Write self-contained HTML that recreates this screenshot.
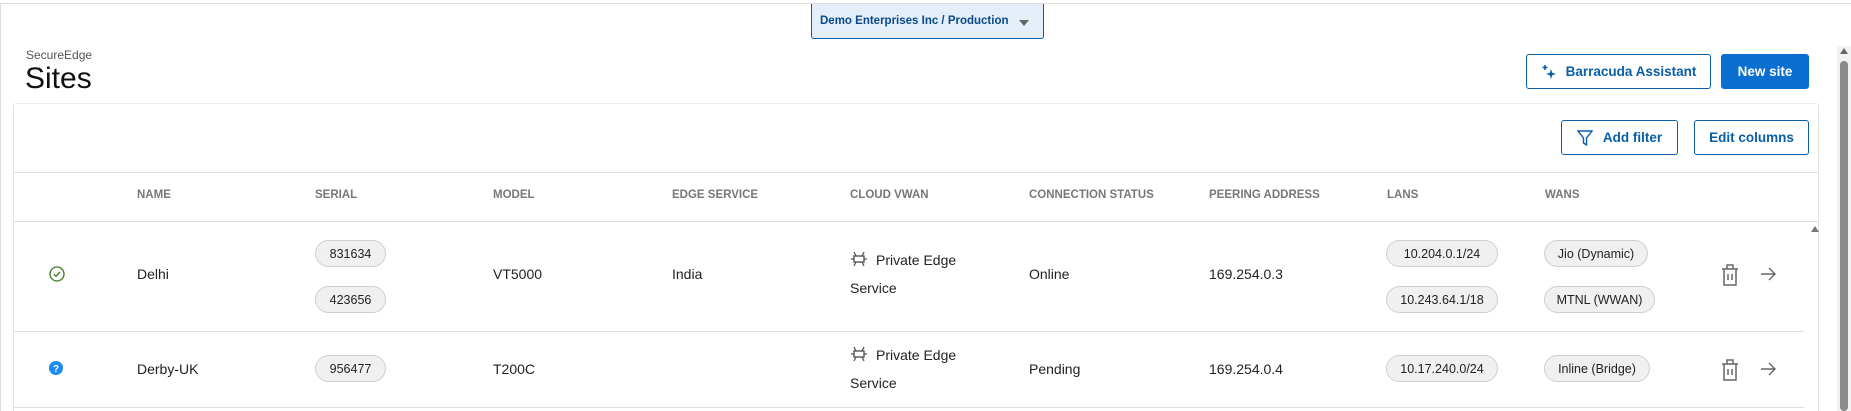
<!DOCTYPE html>
<html><head><meta charset="utf-8"><style>
*{box-sizing:border-box;margin:0;padding:0}
body{width:1851px;height:411px;overflow:hidden;background:#fff;font-family:"Liberation Sans",sans-serif;color:#222;position:relative}
.a{position:absolute}
.h{font-size:11.5px;color:#6b6b6b;top:189px;font-weight:bold;color:#777}
.t{font-size:14px;color:#222}
.chip{position:absolute;height:27px;border:1px solid #cfcfcf;background:#f0f0f0;border-radius:14px;font-size:12.5px;display:flex;align-items:center;justify-content:center;color:#222}
.btn{position:absolute;border:1px solid #0a5ea8;border-radius:3px;color:#0a5ea8;font-size:13.5px;font-weight:bold;display:flex;align-items:center;justify-content:center;background:#fff}
.line{position:absolute;height:1px;background:#e0e0e0}
</style></head><body>
<div class="line" style="left:0;top:3px;width:1851px;background:#ddd"></div>
<div class="a" style="left:0;top:3px;width:1px;height:408px;background:#ddd"></div>
<div class="a" style="left:811px;top:4px;width:233px;height:35px;background:#e4eef9;border:1px solid #0a5ea8;border-top:none;border-radius:0 0 3px 3px;font-size:11.5px;color:#0a4a8a;padding:11px 0 0 8px;font-weight:bold">Demo Enterprises Inc / Production<span style="position:absolute;right:14px;top:16px;border-left:5px solid transparent;border-right:5px solid transparent;border-top:6px solid #666"></span></div>
<div class="a" style="left:26px;top:48px;font-size:12px;color:#555">SecureEdge</div>
<div class="a" style="left:25px;top:62px;font-size:30px;color:#111">Sites</div>
<div class="btn" style="left:1526px;top:54px;width:185px;height:35px"><svg width="16" height="16" viewBox="0 0 16 16" style="margin-right:9px"><path d="M4 1v5M1.5 3.5h5" stroke="#0a5ea8" stroke-width="1.6"/><path d="M10 5l1.2 3.8L15 10l-3.8 1.2L10 15l-1.2-3.8L5 10l3.8-1.2z" fill="#0a5ea8"/></svg>Barracuda Assistant</div>
<div class="btn" style="left:1721px;top:54px;width:88px;height:35px;background:#0a6fd0;border-color:#0a6fd0;color:#fff">New site</div>
<div class="a" style="left:13px;top:103px;width:1806px;height:308px;border-left:1px solid #e4e4e4;border-right:1px solid #e4e4e4;border-top:1px solid #eee;border-radius:3px 3px 0 0"></div>
<div class="btn" style="left:1561px;top:120px;width:117px;height:35px"><svg width="16" height="18" viewBox="0 0 16 18" style="margin-right:10px"><path d="M1 2h14l-5.5 7v7l-3-2v-5z" fill="none" stroke="#0a5ea8" stroke-width="1.4"/></svg>Add filter</div>
<div class="btn" style="left:1694px;top:120px;width:115px;height:35px">Edit columns</div>
<div class="line" style="left:14px;top:172px;width:1804px"></div>
<div class="line" style="left:14px;top:221px;width:1804px"></div>
<div class="line" style="left:14px;top:331px;width:1790px"></div>
<div class="line" style="left:14px;top:407px;width:1790px"></div>
<div class="a h" style="left:137px">NAME</div><div class="a h" style="left:315px">SERIAL</div><div class="a h" style="left:493px">MODEL</div><div class="a h" style="left:672px">EDGE SERVICE</div><div class="a h" style="left:850px">CLOUD VWAN</div><div class="a h" style="left:1029px">CONNECTION STATUS</div><div class="a h" style="left:1209px">PEERING ADDRESS</div><div class="a h" style="left:1387px">LANS</div><div class="a h" style="left:1545px">WANS</div>
<svg class="a" style="left:49px;top:266px" width="16" height="16" viewBox="0 0 16 16"><circle cx="8" cy="8" r="7" fill="none" stroke="#3d7a1d" stroke-width="1.3"/><path d="M5 8.3l2 2 4-4.3" fill="none" stroke="#3d7a1d" stroke-width="1.4"/></svg>
<div class="a t" style="left:137px;top:266px">Delhi</div>
<div class="chip" style="left:315px;top:240px;width:71px">831634</div>
<div class="chip" style="left:315px;top:286px;width:71px">423656</div>
<div class="a t" style="left:493px;top:266px">VT5000</div>
<div class="a t" style="left:672px;top:266px">India</div>
<svg class="a" style="left:850px;top:250px" width="18" height="18" viewBox="0 0 18 18"><rect x="4" y="6" width="10" height="6" fill="none" stroke="#555" stroke-width="1.4"/><path d="M1 9h3M14 9h3M6 6L4 2M12 6l2-4M6 12l-2 4M12 12l2 4" stroke="#555" stroke-width="1.3"/></svg>
<div class="a t" style="left:876px;top:252px">Private Edge</div>
<div class="a t" style="left:850px;top:280px">Service</div>
<div class="a t" style="left:1029px;top:266px">Online</div>
<div class="a t" style="left:1209px;top:266px">169.254.0.3</div>
<div class="chip" style="left:1386px;top:240px;width:112px">10.204.0.1/24</div>
<div class="chip" style="left:1386px;top:286px;width:112px">10.243.64.1/18</div>
<div class="chip" style="left:1544px;top:240px;width:104px">Jio (Dynamic)</div>
<div class="chip" style="left:1544px;top:286px;width:111px">MTNL (WWAN)</div>
<svg class="a" style="left:1719px;top:263px" width="22" height="24" viewBox="0 0 22 24"><path d="M3 6h16M8 6V2h6v4M5 6v16h12V6M9 11v6M13 11v6" fill="none" stroke="#666" stroke-width="1.5"/></svg>
<svg class="a" style="left:1759px;top:265px" width="18" height="18" viewBox="0 0 18 18"><path d="M2 9h14M10 3l6 6-6 6" fill="none" stroke="#666" stroke-width="1.4"/></svg>
<div class="a" style="left:1811px;top:226px;border-left:4px solid transparent;border-right:4px solid transparent;border-bottom:6px solid #777"></div>
<svg class="a" style="left:49px;top:361px" width="14" height="14" viewBox="0 0 14 14"><circle cx="7" cy="7" r="7" fill="#1d8cf0"/><text x="7" y="11" font-size="10" font-weight="bold" fill="#fff" text-anchor="middle" font-family="Liberation Sans">?</text></svg>
<div class="a t" style="left:137px;top:361px">Derby-UK</div>
<div class="chip" style="left:315px;top:355px;width:71px">956477</div>
<div class="a t" style="left:493px;top:361px">T200C</div>
<svg class="a" style="left:850px;top:345px" width="18" height="18" viewBox="0 0 18 18"><rect x="4" y="6" width="10" height="6" fill="none" stroke="#555" stroke-width="1.4"/><path d="M1 9h3M14 9h3M6 6L4 2M12 6l2-4M6 12l-2 4M12 12l2 4" stroke="#555" stroke-width="1.3"/></svg>
<div class="a t" style="left:876px;top:347px">Private Edge</div>
<div class="a t" style="left:850px;top:375px">Service</div>
<div class="a t" style="left:1029px;top:361px">Pending</div>
<div class="a t" style="left:1209px;top:361px">169.254.0.4</div>
<div class="chip" style="left:1386px;top:355px;width:112px">10.17.240.0/24</div>
<div class="chip" style="left:1544px;top:355px;width:106px">Inline (Bridge)</div>
<svg class="a" style="left:1719px;top:358px" width="22" height="24" viewBox="0 0 22 24"><path d="M3 6h16M8 6V2h6v4M5 6v16h12V6M9 11v6M13 11v6" fill="none" stroke="#666" stroke-width="1.5"/></svg>
<svg class="a" style="left:1759px;top:360px" width="18" height="18" viewBox="0 0 18 18"><path d="M2 9h14M10 3l6 6-6 6" fill="none" stroke="#666" stroke-width="1.4"/></svg>
<div class="a" style="left:1837px;top:46px;width:14px;height:365px;background:#f1f1f1"></div>
<div class="a" style="left:1840px;top:61px;width:8px;height:350px;background:#8a8a8a;border-radius:4px"></div>
<div class="a" style="left:1840px;top:48px;border-left:4px solid transparent;border-right:4px solid transparent;border-bottom:6px solid #666"></div>
</body></html>
